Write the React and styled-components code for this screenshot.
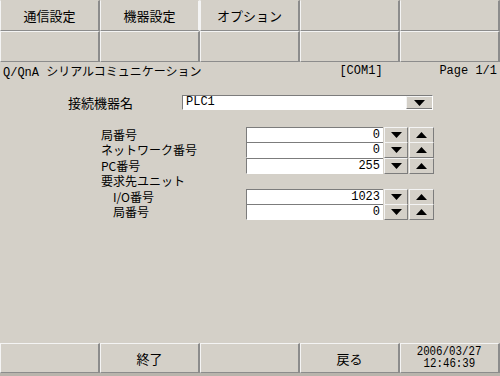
import React from "react";
import styled, { createGlobalStyle } from "styled-components";

const GlobalStyle = createGlobalStyle`
  html, body {
    margin: 0;
    padding: 0;
    background: #d4d0c8;
  }
  body {
    font-family: "Liberation Mono", "Noto Sans CJK JP", monospace;
    color: #000;
  }
`;

const Screen = styled.div`
  width: 500px;
  height: 376px;
  display: flex;
  flex-direction: column;
  background: #d4d0c8;
  overflow: hidden;
`;

/* top tab / button grid */
const KeyGrid = styled.div`
  display: grid;
  grid-template-columns: repeat(5, 100px);
  grid-auto-rows: ${(p) => p.$row}px;
`;

const Key = styled.div`
  box-sizing: border-box;
  display: flex;
  flex-direction: column;
  align-items: center;
  justify-content: center;
  border-left: 1px solid #f4f4f4;
  border-top: 1px solid ${(p) => (p.$flatTop ? "#d4d0c8" : "#f4f4f4")};
  border-right: 2px solid ${(p) => (p.$active ? "#f4f4f4" : "#8c8c8c")};
  border-bottom: 1px solid #8c8c8c;
  font-family: "Noto Sans CJK JP", sans-serif;
  font-size: 13px;
  line-height: 1;
`;

const StampLine = styled.div`
  font-family: "Liberation Mono", monospace;
  font-size: 11px;
  line-height: 12px;
  height: 12px;
  transform: scale(0.98, 1.08);
`;

/* info line */
const InfoBar = styled.div`
  height: 17px;
  display: flex;
  align-items: center;
  padding: 0 3px;
  font-size: 12px;
  white-space: nowrap;
`;

const Title = styled.span`
  flex: 1;
`;

const Port = styled.span`
  width: 100px;
`;

/* body */
const Main = styled.div`
  flex: 1;
  display: flex;
  flex-direction: column;
  padding-top: 16px;
`;

const ConnRow = styled.div`
  display: flex;
  align-items: center;
  padding-left: 68px;
  height: 15px;
`;

const ConnLabel = styled.span`
  width: 114px;
  font-family: "Noto Sans CJK JP", sans-serif;
  font-size: 13px;
`;

const Select = styled.div`
  box-sizing: border-box;
  width: 251px;
  height: 15px;
  display: flex;
  background: #fff;
  border-top: 1px solid #7c7c7c;
  border-left: 1px solid #7c7c7c;
  border-bottom: 1px solid #fff;
  border-right: 1px solid #fff;
  font-size: 12px;
  line-height: 13px;
`;

const SelectText = styled.span`
  flex: 1;
  padding-left: 3px;
`;

const Params = styled.div`
  margin-top: 16.5px;
  display: flex;
  flex-direction: column;
`;

const ParamRow = styled.div`
  display: grid;
  grid-template-columns: ${(p) => 144 - p.$indent}px 137px 24px 25px;
  column-gap: 1px;
  padding-left: ${(p) => 101 + p.$indent}px;
  height: 15.5px;
  align-items: stretch;
`;

const ParamLabel = styled.span`
  font-family: "Noto Sans CJK JP", sans-serif;
  font-size: 12px;
  line-height: 15.5px;
  white-space: nowrap;
`;

const NumField = styled.div`
  box-sizing: border-box;
  background: #fff;
  border-top: 1px solid #7c7c7c;
  border-left: 1px solid #7c7c7c;
  border-bottom: 1px solid #fff;
  text-align: right;
  padding-right: 3px;
  font-size: 12px;
  line-height: 14px;
`;

const Spin = styled.div`
  box-sizing: border-box;
  display: flex;
  align-items: center;
  justify-content: center;
  background: #d4d0c8;
  border-top: 1px solid #f4f4f4;
  border-left: 1px solid #f4f4f4;
  border-right: 1px solid #7c7c7c;
  border-bottom: 1px solid #7c7c7c;
`;

const DropBtn = styled(Spin)`
  width: 26px;
  border-right: none;
`;

const Tri = ({ up }) => (
  <svg width="11" height="6" viewBox="0 0 11 6">
    <polygon points={up ? "0,6 11,6 5.5,0" : "0,0 11,0 5.5,6"} fill="#000" />
  </svg>
);

const Footer = styled.div`
  height: 3px;
  background: #b8b4ac;
`;

const params = [
  { label: "局番号", value: "0", indent: 0 },
  { label: "ネットワーク番号", value: "0", indent: 0 },
  { label: "PC番号", value: "255", indent: 0 },
  { label: "要求先ユニット", value: null, indent: 0 },
  { label: "I/O番号", value: "1023", indent: 12 },
  { label: "局番号", value: "0", indent: 12 },
];

export default function App() {
  return (
    <Screen>
      <GlobalStyle />
      <KeyGrid $row={31}>
        <Key $flatTop>通信設定</Key>
        <Key $flatTop $active>機器設定</Key>
        <Key $flatTop>オプション</Key>
        <Key $flatTop />
        <Key $flatTop />
        <Key />
        <Key />
        <Key />
        <Key />
        <Key />
      </KeyGrid>

      <InfoBar>
        <Title>Q/QnA シリアルコミュニケーション</Title>
        <Port>[COM1]</Port>
        <span>Page 1/1</span>
      </InfoBar>

      <Main>
        <ConnRow>
          <ConnLabel>接続機器名</ConnLabel>
          <Select>
            <SelectText>PLC1</SelectText>
            <DropBtn>
              <Tri />
            </DropBtn>
          </Select>
        </ConnRow>

        <Params>
          {params.map((p, i) => (
            <ParamRow key={i} $indent={p.indent}>
              <ParamLabel>{p.label}</ParamLabel>
              {p.value !== null && (
                <>
                  <NumField>{p.value}</NumField>
                  <Spin>
                    <Tri />
                  </Spin>
                  <Spin>
                    <Tri up />
                  </Spin>
                </>
              )}
            </ParamRow>
          ))}
        </Params>
      </Main>

      <KeyGrid $row={30}>
        <Key />
        <Key>終了</Key>
        <Key />
        <Key>戻る</Key>
        <Key>
          <StampLine>2006/03/27</StampLine>
          <StampLine>12:46:39</StampLine>
        </Key>
      </KeyGrid>
      <Footer />
    </Screen>
  );
}
